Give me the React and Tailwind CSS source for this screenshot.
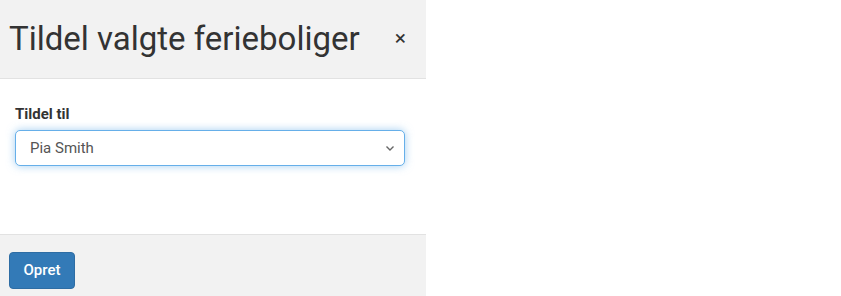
import React from 'react';

const App = () => {
  return (
    <div className="w-[841px] h-[296px] bg-white font-['Roboto',sans-serif] text-[#333]">
      <div className="w-[426px] h-full flex flex-col">
        {/* Header */}
        <div className="h-[79px] bg-[#f2f2f2] border-b border-[#e2e2e2] flex items-center justify-between pl-[9px] pr-[20px]">
          <h1 className="text-[33px] leading-none text-[#333] pb-[2px]">Tildel valgte ferieboliger</h1>
          <button className="text-[21px] leading-none text-[#333] font-normal pb-[2px]">×</button>
        </div>

        {/* Body */}
        <div className="flex-1 bg-white pl-[15px] pr-[21px] pt-[25px]">
          <label className="block text-[15px] font-bold leading-[20px] mb-[6px] text-[#333]">Tildel til</label>
          <div className="h-[36px] flex items-center justify-between pl-[14px] pr-[9px] border border-[#66afe9] rounded-[5px] shadow-[0_0_8px_rgba(102,175,233,0.6)] bg-white">
            <span className="text-[15px] text-[#555]">Pia Smith</span>
            <svg width="10" height="10" viewBox="0 0 10 10" fill="none" stroke="#666" strokeWidth="1.4">
              <path d="M1.5 3.5 L5 7 L8.5 3.5" />
            </svg>
          </div>
        </div>

        {/* Footer */}
        <div className="h-[62px] bg-[#f2f2f2] border-t border-[#e2e2e2] pl-[9px] pt-[17px]">
          <button className="h-[37px] w-[66px] rounded-[4px] bg-[#337ab7] border border-[#2e6da4] text-white text-[15px] font-medium">
            Opret
          </button>
        </div>
      </div>
    </div>
  );
};

export default App;
